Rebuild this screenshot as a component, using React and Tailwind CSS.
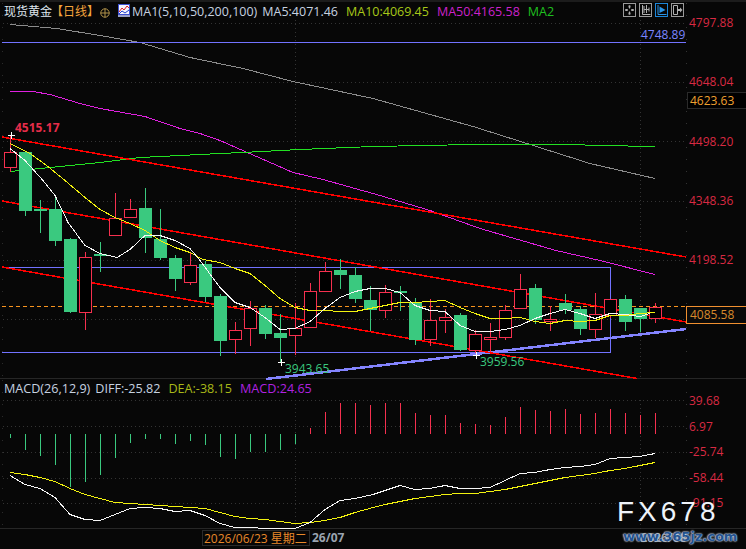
const UP = '#f5304f'
const DOWN = '#3ac97f'

// [high, low, body top, body bottom, rising], one candle every 15px
const candles = [
	[135, 172, 152, 167, 1], [152, 216, 152, 211, 0], [200, 233, 209, 210, 0], [196, 246, 209, 241, 0],
	[238, 313, 239, 312, 0], [252, 330, 257, 312, 1], [242, 272, 254, 256, 0], [193, 236, 218, 235, 1],
	[199, 218, 209, 217, 1], [188, 253, 208, 238, 0], [209, 260, 239, 258, 0], [255, 291, 258, 279, 0],
	[253, 285, 265, 282, 1], [261, 302, 264, 297, 0], [294, 356, 296, 341, 0], [322, 354, 330, 339, 1],
	[301, 346, 308, 328, 1], [305, 339, 308, 334, 0], [314, 363, 333, 338, 0], [303, 355, 328, 335, 1],
	[283, 328, 291, 327, 1], [262, 292, 271, 291, 1], [259, 289, 270, 275, 0], [267, 303, 275, 299, 0],
	[286, 331, 300, 310, 0], [285, 318, 292, 310, 1], [286, 311, 291, 293, 0], [298, 345, 303, 340, 0],
	[299, 346, 320, 339, 1], [309, 333, 317, 320, 1], [313, 351, 315, 350, 0], [330, 353, 334, 350, 1],
	[323, 352, 337, 339, 1], [305, 340, 310, 337, 1], [274, 309, 289, 308, 1], [284, 324, 288, 320, 0],
	[306, 331, 319, 321, 1], [294, 314, 303, 310, 0], [306, 335, 309, 329, 0], [293, 338, 314, 329, 1],
	[299, 318, 299, 315, 1], [295, 331, 299, 322, 0], [308, 332, 308, 319, 0], [303, 323, 307, 318, 1],
]

const grayLine = '10,24 57,28 100,35 140,42 190,57 243,68 293,81 373,98 423,112 473,126 530,144 590,163 655,178'
const magentaLine = '10,91 33,91 50,94 80,103 100,108 145,116 180,128 200,133 220,140 293,172 323,179 380,195 430,210 480,228 556,250 600,260 655,274'
const greenLine = '10,171 50,167 100,162 140,157 180,155 220,153 243,152 300,149 373,146 423,145 473,144 570,144 600,145 655,146'
const whiteLine = '10,148 25,160 43,180 55,195 68,222 85,245 100,253 117,257 130,249 145,235 160,235 175,240 190,248 200,260 220,287 235,302 250,307 265,317 280,329 295,328 310,321 325,308 340,297 355,291 370,288 385,288 400,292 415,305 430,310 445,311 460,325 475,331 490,331 505,329 520,325 535,318 550,313 565,309 580,313 595,318 610,313 625,314 640,316 650,313'
const yellowLine = '10,143 30,153 48,166 65,180 85,197 100,209 115,217 130,223 145,230 160,240 175,247 190,252 203,259 220,262 235,268 250,273 265,285 280,298 295,307 310,310 325,310 340,311 355,311 370,308 385,305 400,302 415,302 430,301 445,300 460,307 475,313 490,318 505,318 520,317 535,321 550,323 565,320 580,321 595,320 610,315 625,315 640,313 655,312'

// macd histogram end points, one per candle, base at 433.5
const macdBars = [438, 450, 456, 465, 487, 482, 475, 458, 443, 439, 439, 444, 441, 445, 457, 459, 452, 452, 450, 444,
	428, 412, 403, 403, 405, 403, 403, 413, 415, 415, 423, 424, 425, 417, 407, 410, 411, 409, 414, 413, 409, 413, 415, 413]
const diffLine = '10,475 25,484 40,488 55,497 70,514 85,519 100,520 115,514 130,508 145,507 160,508 175,511 190,510 205,515 220,523 235,527 250,527 265,528 280,528 295,528 310,522 325,509 340,500 355,498 373,494 385,490 400,485 415,489 430,488 445,485 460,488 475,488 490,487 505,480 520,473 535,472 550,469 565,467 580,466 595,464 610,458 625,457 640,456 655,453'
const deaLine = '10,472 25,474 40,477 55,481 70,488 85,494 100,498 115,502 130,503 145,504 160,505 175,506 190,507 205,508 220,512 235,516 250,518 265,519 280,521 295,523 310,522 325,520 340,517 355,512 373,507 385,504 400,501 415,498 430,496 445,494 460,493 475,493 490,491 505,489 520,486 535,483 550,480 565,477 580,475 595,473 610,470 625,468 640,465 655,462'

const mainGrid = [23.5, 82.5, 141.5, 201.5, 260.5, 319.5]
const macdGrid = [400.5, 426.5, 452.5, 478.5, 503.5]
const priceRows = ['4797.88', '4648.04', '4498.20', '4348.36', '4198.52']
const macdRows = ['39.68', '6.97', '-25.74', '-58.44', '-91.15']

// half a pixel down, flat runs on a whole y vanish with crispEdges
function Trend({ points, color }) {
	return <polyline points={points} fill="none" stroke={color} transform="translate(0 0.5)" />
}

function ToolButton({ active, children }) {
	return <div className={active
		? 'w-[13px] h-[14px] border border-[#1c86d8] flex items-center justify-center'
		: 'w-[13px] h-[14px] border border-[#9a9a9a] flex items-center justify-center'}>
		<svg width="11" height="12" viewBox="0 0 11 12" fill="none" stroke={active ? '#2a95e8' : '#b0b0b0'}>
			{children}
		</svg>
	</div>
}

function Toolbar() {
	return <div className="ml-auto mr-[62px] flex gap-[3px]">
		<ToolButton>
			<path d="M1 6H4M7 6H10M5.5 1.5V4.5M5.5 7.5V10.5" />
			<path d="M1.5 5H3.5V7H1.5ZM7.5 5H9.5V7H7.5ZM4.5 1.5H6.5V3.5H4.5ZM4.5 8.5H6.5V10.5H4.5Z" fill="#b0b0b0" stroke="none" />
		</ToolButton>
		<ToolButton>
			<path d="M2.5 1V10.5H10.5M4 2V9M4 5.5H9M9 3.5V7.5M6.5 1V9" />
		</ToolButton>
		<ToolButton active>
			<path d="M2 1V10.5H10.5" />
			<path d="M3.5 2.5L9.5 6L3.5 9Z" fill="#2a95e8" stroke="none" />
		</ToolButton>
		<ToolButton>
			<path d="M1.5 1.5H5.5V10.5H1.5Z" />
			<path d="M5 6H9" strokeWidth="2" />
			<path d="M8 3.5L10.5 6L8 8.5Z" fill="#b0b0b0" stroke="none" />
		</ToolButton>
	</div>
}

function MaIcon() {
	return <svg width="12" height="13" viewBox="0 0 12 13" className="shrink-0">
		<rect x="0.5" y="0.5" width="11" height="10" fill="#f4f4ff" stroke="#3c50d0" />
		<path d="M1 8L4 4L6 6L9 2L11 4" fill="none" stroke="#e02020" />
		<path d="M1 10L4 7L7 9L11 6" fill="none" stroke="#2040d0" />
		<rect x="0" y="11" width="12" height="2" fill="#9aa0c8" />
	</svg>
}

function MainChart() {
	return <svg width="746" height="380" shapeRendering="crispEdges" className="absolute left-0 top-0">
		{mainGrid.map(y => <line key={y} x1="3" x2="686" y1={y} y2={y} stroke="#333" strokeDasharray="1 3" />)}
		<line x1="295.5" x2="295.5" y1="20" y2="379" stroke="#333" strokeDasharray="1 3" />
		<line x1="640.5" x2="640.5" y1="20" y2="379" stroke="#333" strokeDasharray="1 3" />
		<line x1="2.5" x2="2.5" y1="3" y2="379" stroke="#2a2a2a" strokeDasharray="1 11" />
		<line x1="686.5" x2="686.5" y1="3" y2="379" stroke="#333" strokeDasharray="1 11" />

		<Trend points={grayLine} color="#8c8c8c" />
		<Trend points={magentaLine} color="#e020e0" />
		<Trend points={greenLine} color="#22e022" />

		<line x1="2" x2="686" y1="42.5" y2="42.5" stroke="#7272ff" />
		<path d="M2 267.5H610.5V352.5H2" fill="none" stroke="#7272ff" />
		<line x1="2" x2="686" y1="306.5" y2="306.5" stroke="#f7931e" strokeDasharray="4 3" />
		<line x1="266" x2="686" y1="379" y2="329" stroke="#8484ff" strokeWidth="2.5" />

		<line x1="2" x2="686" y1="137" y2="257" stroke="#f00" strokeWidth="1.5" />
		<line x1="2" x2="686" y1="201" y2="322" stroke="#f00" strokeWidth="1.5" />
		<line x1="2" x2="637" y1="267" y2="378.5" stroke="#f00" strokeWidth="1.5" />

		{candles.map(([high, low, top, bottom, rising], i) => {
			const x = 10.5 + 15 * i
			const color = rising ? UP : DOWN
			if (rising) {
				return <g key={i} stroke={color}>
					<line x1={x} x2={x} y1={high} y2={top} />
					<line x1={x} x2={x} y1={bottom} y2={low} />
					<rect x={x - 6} y={top + 0.5} width="12" height={Math.max(bottom - top, 1)} fill="#000" />
				</g>
			}
			return <g key={i}>
				<line x1={x} x2={x} y1={high} y2={low} stroke={color} />
				<rect x={x - 6.5} y={top} width="13" height={Math.max(bottom - top, 2)} fill={color} />
			</g>
		})}

		<Trend points={yellowLine} color="#f2f20f" />
		<Trend points={whiteLine} color="#f6f6f6" />

		<path d="M7.5 135.5H14.5M11 132V139M277.5 362.5H284.5M281 359V366M472.5 355.5H479.5M476 352V359" stroke="#fff" />
	</svg>
}

function MacdChart() {
	return <svg width="746" height="151" viewBox="0 379 746 151" shapeRendering="crispEdges" className="absolute left-0 top-0">
		{macdGrid.map(y => <line key={y} x1="3" x2="686" y1={y} y2={y} stroke="#333" strokeDasharray="1 3" />)}
		<line x1="295.5" x2="295.5" y1="400" y2="529" stroke="#333" strokeDasharray="1 3" />
		<line x1="640.5" x2="640.5" y1="400" y2="529" stroke="#333" strokeDasharray="1 3" />
		<line x1="2.5" x2="2.5" y1="380" y2="529" stroke="#2a2a2a" strokeDasharray="1 11" />
		<line x1="686.5" x2="686.5" y1="380" y2="529" stroke="#333" strokeDasharray="1 11" />
		{macdBars.map((end, i) => <line key={i} x1={10.5 + 15 * i} x2={10.5 + 15 * i} y1="433.5" y2={end}
			stroke={end > 433.5 ? DOWN : UP} />)}
		<Trend points={deaLine} color="#f2f20f" />
		<Trend points={diffLine} color="#f6f6f6" />
	</svg>
}

export default function App() {
	return (
		<div className="relative w-[746px] h-[549px] overflow-hidden bg-[#070707] flex flex-col font-['Open_Sans','Noto_Sans_CJK_SC',sans-serif] text-[12px]">
			<div className="absolute inset-x-0 top-0 h-[2px] bg-[#1c1c1c]" />

			{/* main k-line panel */}
			<div className="relative h-[379px] shrink-0 border-b border-[#262626]">
				<MainChart />
				<div className="relative flex items-start h-[24px] pt-[3px] pl-[4px] text-[12.5px] leading-[18px] whitespace-nowrap">
					<span className="text-[#dfe6ee] text-[12px]">现货黄金</span>
					<span className="ml-[-1px] text-[#f3a33c] text-[12px]">【日线】</span>
					<svg width="10" height="10" viewBox="0 0 10 10" className="ml-[1px] mt-[5px] mr-[8px] shrink-0" fill="none" stroke="#b0924a">
						<circle cx="5" cy="5" r="4.2" />
						<path d="M0.5 5H9.5M5 0.5V9.5" />
					</svg>
					<div className="mt-[1px] mr-[2px]"><MaIcon /></div>
					<span className="text-[#c6d2e0]">MA1(5,10,50,200,100)</span>
					<span className="ml-[5px] text-[#c6d2e0]">MA5:4071.46</span>
					<span className="ml-[8px] text-[#a8c818]">MA10:4069.45</span>
					<span className="ml-[8px] text-[#cc22cc]">MA50:4165.58</span>
					<span className="ml-[8px] text-[#1fc01f]">MA2</span>
					<Toolbar />
				</div>

				{/* price axis */}
				<div className="absolute left-[689px] top-[14px] flex flex-col text-[#d92a43] leading-[18px]">
					{priceRows.map(p => <span key={p} className="h-[59.25px]">{p}</span>)}
				</div>

				{/* price tags over the chart */}
				<span className="absolute left-[15px] top-[119px] font-bold text-[#e52d4a] leading-[18px]">4515.17</span>
				<span className="absolute left-[641px] top-[26px] text-[#7a86ff] leading-[18px]">4748.89</span>
				<span className="absolute left-[687px] top-[92px] w-[59px] h-[17px] pl-[2px] bg-black border-y border-l border-[#2a2a2a] text-[#f0a030] leading-[15px]">4623.63</span>
				<span className="absolute left-[686px] top-[306px] w-[60px] h-[18px] pl-[3px] bg-[#0a0a0a] border border-[#f09030] border-r-0 text-[#d88a2c] leading-[16px]">4085.58</span>
				<span className="absolute left-[285px] top-[360px] text-[#3ac97f] leading-[18px]">3943.65</span>
				<span className="absolute left-[480px] top-[353px] text-[#3ac97f] leading-[18px]">3959.56</span>
			</div>

			{/* macd panel */}
			<div className="relative h-[150px] shrink-0 border-b border-[#262626]">
				<MacdChart />
				<div className="relative flex h-[20px] pl-[4px] pt-[1px] text-[12.6px] leading-[18px] whitespace-nowrap">
					<span className="text-[#c6d2e0]">MACD(26,12,9)</span>
					<span className="ml-[5px] text-[#c6d2e0]">DIFF:-25.82</span>
					<span className="ml-[8px] text-[#a8b818]">DEA:-38.15</span>
					<span className="ml-[8px] text-[#b022e0]">MACD:24.65</span>
				</div>
				<div className="absolute left-[689px] top-[13px] flex flex-col text-[#d92a43] leading-[18px]">
					{macdRows.map(p => <span key={p} className="h-[25.6px]">{p}</span>)}
				</div>
			</div>

			{/* time axis */}
			<div className="flex h-[20px] pt-[1px] pl-[202px] whitespace-nowrap">
				<span className="h-[16px] w-[108px] border border-[#2a2a2a] pl-[1px] text-[#e8882a] leading-[15px]">2026/06/23 星期二</span>
				<span className="ml-[2px] font-bold text-[#9aa4b0] leading-[16px]">26/07</span>
				<span className="ml-[296px] font-bold text-[#9aa4b0] leading-[16px]">2026/08</span>
			</div>

			{/* watermark */}
			<div className="absolute left-[617px] top-[495px] flex flex-col whitespace-nowrap font-['Liberation_Sans',sans-serif]">
				<span className="text-[28px] leading-[34px] tracking-[4px] text-[#eef3fa]">FX678</span>
				<span className="ml-[6px] font-['DejaVu_Sans',sans-serif] text-[13px] leading-[16px] font-bold text-[#24538f] [text-shadow:0_0_2px_#c6d6ea,0_0_2px_#c6d6ea,0_0_1px_#c6d6ea]">www.365jz.com</span>
			</div>
		</div>
	)
}
